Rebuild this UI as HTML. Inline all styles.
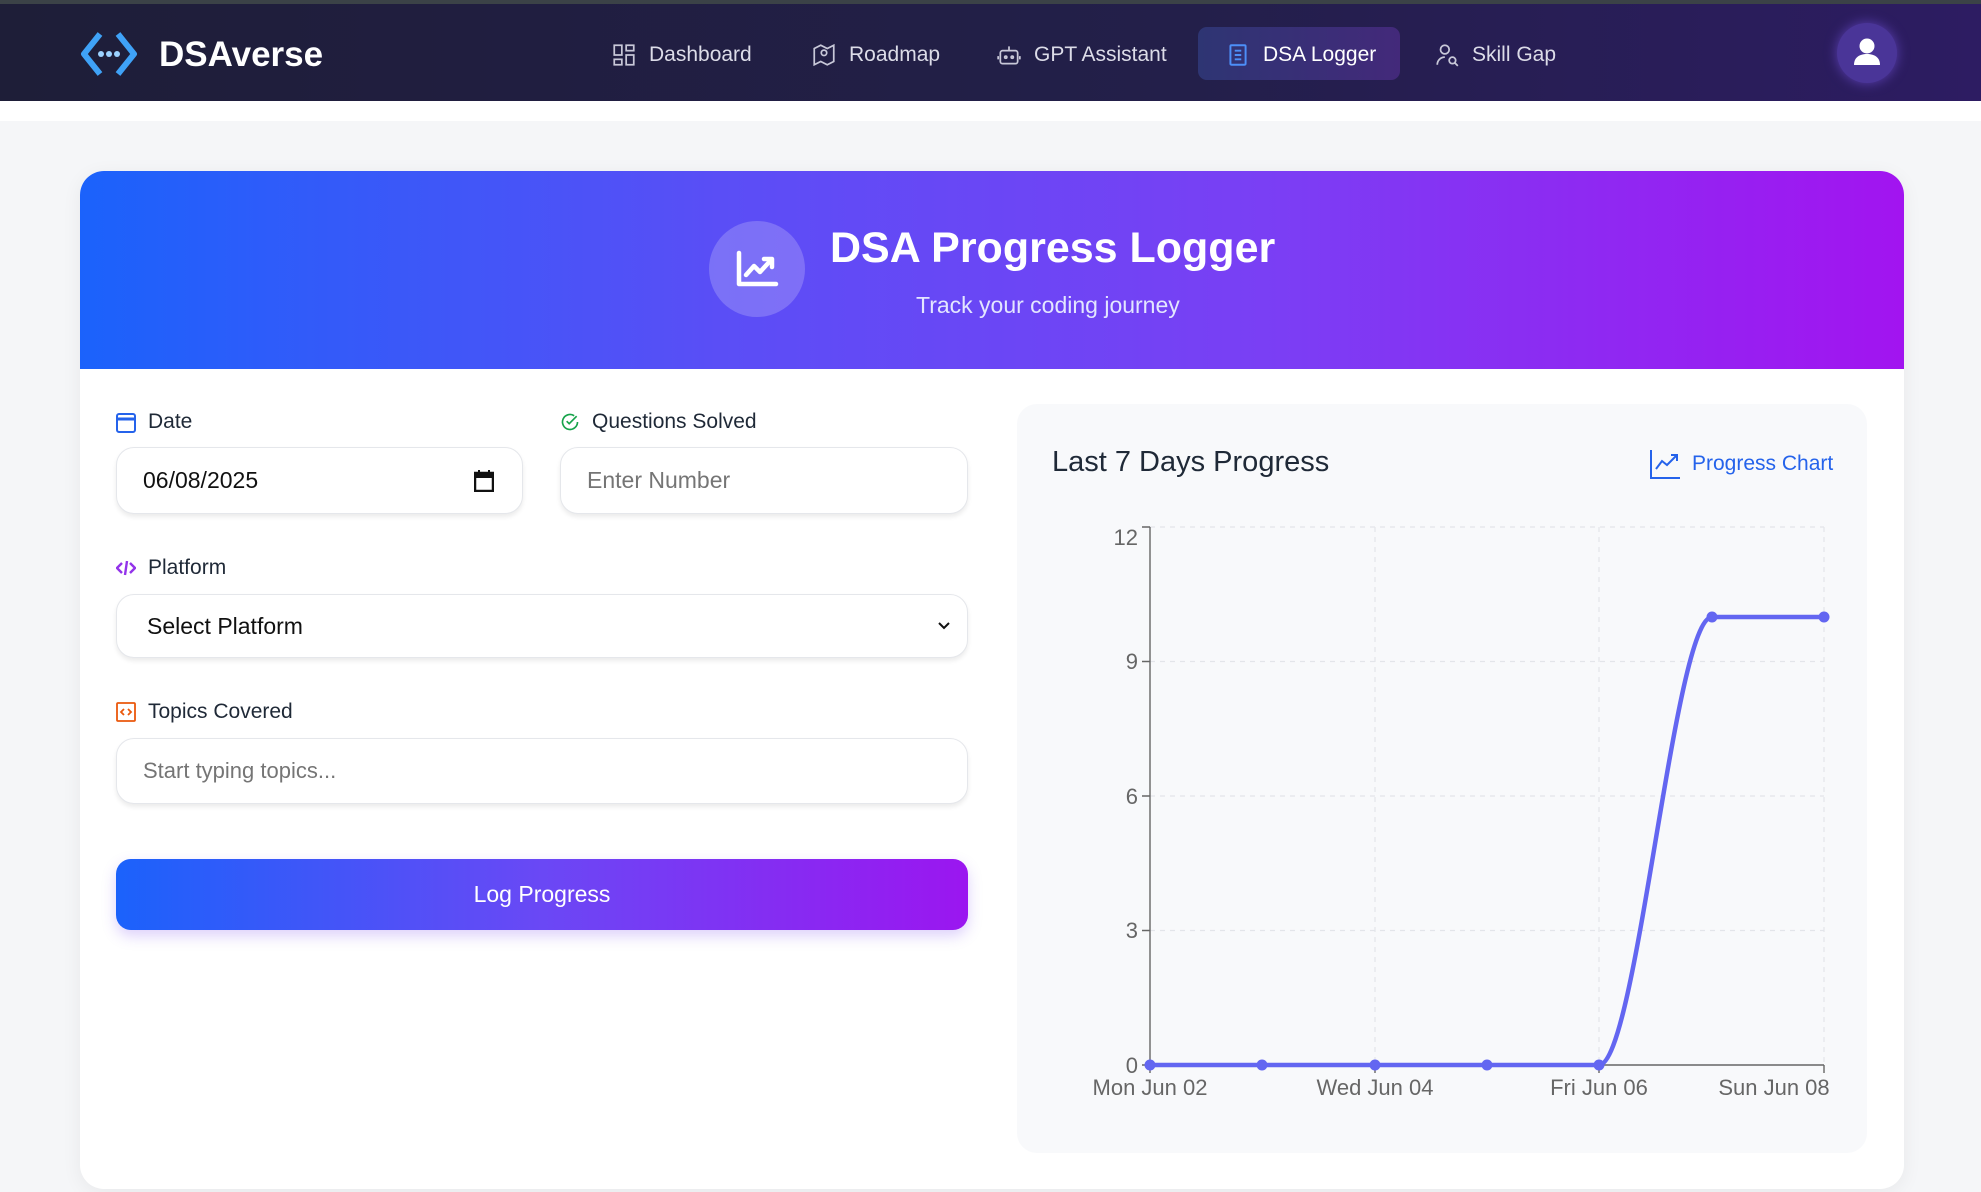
<!DOCTYPE html>
<html><head><meta charset="utf-8"><style>
*{box-sizing:border-box;margin:0;padding:0}
body{width:1981px;height:1192px;overflow:hidden;background:#f5f6f8;font-family:"Liberation Sans",sans-serif;position:relative}
.top{position:absolute;left:0;top:0;width:1981px;height:4px;background:#3b4247}
.nav{position:absolute;left:0;top:4px;width:1981px;height:97px;background:linear-gradient(90deg,#1e1e38,#231f4a 60%,#2d1c62)}
.white{position:absolute;left:0;top:101px;width:1981px;height:20px;background:#fff}
.logo{position:absolute;left:159px;top:35px;color:#fff;font-weight:bold;font-size:35px}
.ni{position:absolute;top:42px;color:#dcdce8;font-size:21px;display:flex;align-items:center;gap:12px}
.ni svg{width:26px;height:26px}
.active{position:absolute;left:1198px;top:27px;width:202px;height:53px;border-radius:9px;background:linear-gradient(90deg,#2e3573,#43297a)}
.av{position:absolute;left:1837px;top:23px;width:60px;height:60px;border-radius:50%;background:#4a3598;box-shadow:0 0 12px #5a3fb0}
.card{position:absolute;left:80px;top:171px;width:1824px;height:1018px;background:#fff;border-radius:24px;box-shadow:0 4px 20px rgba(0,0,0,.06);overflow:hidden}
.hdr{position:absolute;left:0;top:0;width:1824px;height:198px;background:linear-gradient(90deg,#1b62fb,#5a4ef6 35%,#7a3ff4 65%,#a214f0)}
.circ{position:absolute;left:629px;top:50px;width:96px;height:96px;border-radius:50%;background:rgba(255,255,255,.2);display:flex;align-items:center;justify-content:center}
.title{position:absolute;left:750px;top:53px;color:#fff;font-weight:bold;font-size:43px}
.sub{position:absolute;left:836px;top:121px;color:#e3e6ff;font-size:23px}
.lbl{position:absolute;font-size:21px;color:#1f2937;display:flex;align-items:center;gap:12px}
.inp{position:absolute;background:#fff;border:1px solid #e5e7eb;border-radius:18px;box-shadow:0 3px 5px rgba(0,0,0,.08);font-size:23px;display:flex;align-items:center;padding-left:26px}
.btn{position:absolute;left:116px;top:859px;width:852px;height:71px;border-radius:15px;background:linear-gradient(90deg,#1b62fb,#6a48f5 50%,#9b16f0);color:#fff;font-size:23px;display:flex;align-items:center;justify-content:center;box-shadow:0 6px 14px rgba(120,70,240,.25)}
.panel{position:absolute;left:1017px;top:404px;width:850px;height:749px;background:#f8f9fb;border-radius:20px}
</style></head><body>
<div class="top"></div>
<div class="nav"></div>
<div class="white"></div>
<svg style="position:absolute;left:80px;top:30px" width="58" height="48" viewBox="0 0 58 48"><path d="M20 4 L4 24 L20 44" fill="none" stroke="#3fa2f7" stroke-width="6" stroke-linejoin="round"/><path d="M38 4 L54 24 L38 44" fill="none" stroke="#3fa2f7" stroke-width="6" stroke-linejoin="round"/><circle cx="21" cy="24" r="3" fill="#9cd2ff"/><circle cx="29" cy="24" r="3" fill="#9cd2ff"/><circle cx="37" cy="24" r="3" fill="#9cd2ff"/></svg>
<div class="logo">DSAverse</div>
<div class="active"></div>
<div class="ni" style="left:611px"><svg viewBox="0 0 24 24" fill="none" stroke="#c8c8d8" stroke-width="1.6"><rect x="3" y="3" width="7" height="9"/><rect x="14" y="3" width="7" height="5"/><rect x="14" y="12" width="7" height="9"/><rect x="3" y="16" width="7" height="5"/></svg>Dashboard</div>
<div class="ni" style="left:811px"><svg viewBox="0 0 24 24" fill="none" stroke="#c8c8d8" stroke-width="1.6"><path d="M3 6 L9 3 L15 6 L21 3 V18 L15 21 L9 18 L3 21Z"/><circle cx="12" cy="10" r="2.5"/></svg>Roadmap</div>
<div class="ni" style="left:996px"><svg viewBox="0 0 24 24" fill="none" stroke="#c8c8d8" stroke-width="1.6"><rect x="4" y="8" width="16" height="12" rx="2"/><path d="M12 4v4M2 13v3M22 13v3"/><circle cx="9" cy="14" r="1"/><circle cx="15" cy="14" r="1"/></svg>GPT Assistant</div>
<div class="ni" style="left:1225px;color:#fff"><svg viewBox="0 0 24 24" fill="none" stroke="#4d8ff8" stroke-width="1.8"><rect x="5" y="3" width="14" height="18" rx="1"/><path d="M9 8h6M9 12h6M9 16h6"/></svg>DSA Logger</div>
<div class="ni" style="left:1434px"><svg viewBox="0 0 24 24" fill="none" stroke="#c8c8d8" stroke-width="1.6"><circle cx="10" cy="7" r="4"/><path d="M3 21c0-4 3-7 7-7"/><circle cx="17" cy="17" r="3"/><path d="M19 19l3 3"/></svg>Skill Gap</div>
<div class="av"><svg width="60" height="60" viewBox="0 0 60 60"><circle cx="30" cy="23" r="7.5" fill="#fff"/><path d="M17 42c0-8 6-11 13-11s13 3 13 11z" fill="#fff"/></svg></div>

<div class="card">
<div class="hdr">
<div class="circ"><svg width="44" height="40" viewBox="0 0 44 40" fill="none" stroke="#fff" stroke-width="4.5" stroke-linecap="round" stroke-linejoin="round"><path d="M4 4V35H41"/><path d="M11 26L19 17L25 23L36 11"/><path d="M29 10H37V18"/></svg></div>
<div class="title">DSA Progress Logger</div>
<div class="sub">Track your coding journey</div>
</div>
</div>

<div class="lbl" style="left:116px;top:410px"><svg width="20" height="22" viewBox="0 0 20 22" fill="none" stroke="#2563eb" stroke-width="2"><rect x="1" y="3" width="18" height="18" rx="2"/><path d="M1 8h18" stroke-width="3"/></svg>Date</div>
<div class="lbl" style="left:560px;top:410px"><svg width="20" height="20" viewBox="0 0 24 24" fill="none" stroke="#16a34a" stroke-width="2"><path d="M21 12a9 9 0 1 1-4-7.5"/><path d="M8 11l3 3 9-9"/></svg>Questions Solved</div>
<div class="inp" style="left:116px;top:447px;width:407px;height:67px;color:#111">06/08/2025<svg style="position:absolute;right:28px;top:22px" width="20" height="22" viewBox="0 0 20 22"><rect x="1" y="3" width="18" height="18" fill="none" stroke="#111" stroke-width="2.5"/><rect x="1" y="3" width="18" height="5" fill="#111"/><path d="M5 0v4M15 0v4" stroke="#111" stroke-width="2"/></svg></div>
<div class="inp" style="left:560px;top:447px;width:408px;height:67px;color:#757575">Enter Number</div>
<div class="lbl" style="left:116px;top:556px"><svg width="20" height="18" viewBox="0 0 20 18" fill="none" stroke="#9333ea" stroke-width="2.4"><path d="M6 4L1 9l5 5M14 4l5 5-5 5M11 2L9 16"/></svg>Platform</div>
<div class="inp" style="left:116px;top:594px;width:852px;height:64px;color:#111;padding-left:30px">Select Platform<svg style="position:absolute;right:16px;top:26px" width="14" height="10" viewBox="0 0 14 10"><path d="M2 2l5 5 5-5" fill="none" stroke="#111" stroke-width="2"/></svg></div>
<div class="lbl" style="left:116px;top:700px"><svg width="20" height="20" viewBox="0 0 20 20" fill="none" stroke="#ea580c" stroke-width="1.8"><rect x="1" y="1" width="18" height="18" rx="1"/><path d="M8 7l-3 3 3 3M12 7l3 3-3 3"/></svg>Topics Covered</div>
<div class="inp" style="left:116px;top:738px;width:852px;height:66px;color:#757575;font-size:22px">Start typing topics...</div>
<div class="btn">Log Progress</div>

<div class="panel"></div>
<div style="position:absolute;left:1052px;top:446px;font-size:29px;color:#1f2937">Last 7 Days Progress</div>
<div style="position:absolute;left:1650px;top:449px;font-size:21px;color:#2563eb;display:flex;align-items:center;gap:12px"><svg width="30" height="30" viewBox="0 0 30 30" fill="none" stroke="#2563eb" stroke-width="2"><path d="M1 1V29H30"/><path d="M6 20L12 12L17 16L27 6"/><path d="M21 6H27V12"/></svg>Progress Chart</div>

<svg style="position:absolute;left:0;top:0" width="1981" height="1192">
<g stroke="#e3e5ea" stroke-dasharray="5 5" stroke-width="1.2">
<path d="M1150 527H1824M1150 661.5H1824M1150 796H1824M1150 930.5H1824"/>
<path d="M1375 527V1065M1599 527V1065M1824 527V1065"/>
</g>
<g stroke="#666" stroke-width="1.4" fill="none">
<path d="M1150 527V1065H1824"/>
<path d="M1142 527H1150M1142 661.5H1150M1142 796H1150M1142 930.5H1150M1142 1065H1150"/>
<path d="M1150 1065v8M1375 1065v8M1599 1065v8M1824 1065v8"/>
</g>
<g font-family="Liberation Sans,sans-serif" font-size="22" fill="#666" text-anchor="end">
<text x="1138" y="545">12</text><text x="1138" y="669">9</text><text x="1138" y="804">6</text><text x="1138" y="938">3</text><text x="1138" y="1073">0</text>
</g>
<g font-family="Liberation Sans,sans-serif" font-size="22" fill="#666" text-anchor="middle">
<text x="1150" y="1095">Mon Jun 02</text><text x="1375" y="1095">Wed Jun 04</text><text x="1599" y="1095">Fri Jun 06</text><text x="1774" y="1095">Sun Jun 08</text>
</g>
<path d="M1150 1065H1599C1636.7 1065 1674.3 617 1712 617H1824" fill="none" stroke="#6366f1" stroke-width="4.5"/>
<g fill="#6366f1"><circle cx="1150" cy="1065" r="5.5"/><circle cx="1262" cy="1065" r="5.5"/><circle cx="1375" cy="1065" r="5.5"/><circle cx="1487" cy="1065" r="5.5"/><circle cx="1599" cy="1065" r="5.5"/><circle cx="1712" cy="617" r="5.5"/><circle cx="1824" cy="617" r="5.5"/></g>
</svg>
</body></html>
